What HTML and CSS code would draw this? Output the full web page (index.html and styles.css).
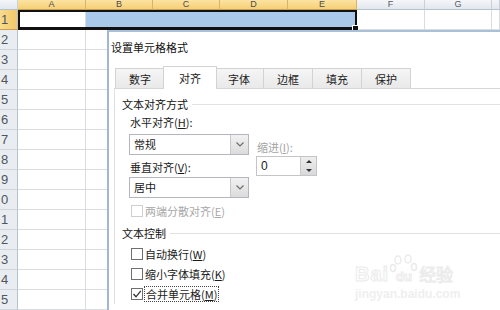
FILE: index.html
```html
<!DOCTYPE html>
<html lang="zh-CN">
<head>
    <meta charset="UTF-8">
    <title>设置单元格格式</title>
    <link rel="stylesheet" href="styles.css">
</head>
<body>

    <div class="sheet" id="sheet"></div>

    <div class="dialog">
        <div class="dialog-title">设置单元格格式</div>

        <div class="tabs">
            <div class="tab">数字</div>
            <div class="tab active">对齐</div>
            <div class="tab">字体</div>
            <div class="tab">边框</div>
            <div class="tab">填充</div>
            <div class="tab">保护</div>
        </div>

        <div class="panel">
            <div class="group-head">
                <span>文本对齐方式</span>
                <span class="group-line"></span>
            </div>

            <div class="align-row">
                <div class="align-col">
                    <div class="label">水平对齐(<u>H</u>):</div>
                    <div class="combo">
                        <span class="combo-text">常规</span>
                        <span class="combo-btn">
                            <svg width="8" height="5" viewBox="0 0 8 5"><path d="M0.5 0.5 L4 4 L7.5 0.5" fill="none" stroke="#6d6d6d" stroke-width="1.2"/></svg>
                        </span>
                    </div>
                    <div class="label second">垂直对齐(<u>V</u>):</div>
                    <div class="combo">
                        <span class="combo-text">居中</span>
                        <span class="combo-btn">
                            <svg width="8" height="5" viewBox="0 0 8 5"><path d="M0.5 0.5 L4 4 L7.5 0.5" fill="none" stroke="#6d6d6d" stroke-width="1.2"/></svg>
                        </span>
                    </div>
                </div>

                <div class="indent-col">
                    <div class="label disabled">缩进(<u>I</u>):</div>
                    <div class="spin">
                        <span class="spin-text">0</span>
                        <span class="spin-btn">
                            <span class="spin-up"></span>
                            <span class="spin-down"></span>
                        </span>
                    </div>
                </div>
            </div>

            <div class="check-row disabled first">
                <span class="box"></span>
                <span>两端分散对齐(<u>E</u>)</span>
            </div>

            <div class="group-head control">
                <span>文本控制</span>
                <span class="group-line"></span>
            </div>

            <div class="check-list">
                <div class="check-row">
                    <span class="box"></span>
                    <span>自动换行(<u>W</u>)</span>
                </div>
                <div class="check-row">
                    <span class="box"></span>
                    <span>缩小字体填充(<u>K</u>)</span>
                </div>
                <div class="check-row">
                    <span class="box">
                        <svg width="10" height="10" viewBox="0 0 10 10"><path d="M1.5 5 L4 7.8 L8.8 1.8" fill="none" stroke="#333" stroke-width="1.3"/></svg>
                    </span>
                    <span class="focus">合并单元格(<u>M</u>)</span>
                </div>
            </div>
        </div>

        <div class="watermark">
            <div class="wm-top">
                <span class="wm-bai">Bai</span>
                <span class="wm-paw">
                    <svg width="30" height="30" viewBox="0 0 30 30">
                        <ellipse cx="9" cy="6" rx="3" ry="4" fill="none" stroke="#ebebeb" stroke-width="1.5"/>
                        <ellipse cx="19" cy="5" rx="3" ry="4" fill="none" stroke="#ebebeb" stroke-width="1.5"/>
                        <ellipse cx="4" cy="14" rx="2.5" ry="3.5" fill="none" stroke="#ebebeb" stroke-width="1.5"/>
                        <ellipse cx="25" cy="13" rx="2.5" ry="3.5" fill="none" stroke="#ebebeb" stroke-width="1.5"/>
                        <text x="15" y="27" text-anchor="middle" font-size="13" font-weight="bold" fill="none" stroke="#ebebeb" font-family="Liberation Sans, sans-serif">du</text>
                    </svg>
                </span>
                <span class="wm-jy">经验</span>
            </div>
            <div class="wm-url">jingyan.baidu.com</div>
        </div>
    </div>

    <script>
        document.addEventListener('DOMContentLoaded', function() {
            buildSheet();
        });

        function buildSheet() {
            const sheet = document.getElementById('sheet');
            const cols = ['A', 'B', 'C', 'D', 'E', 'F', 'G', ''];
            // digits visible in the cropped row header
            const rowLabels = ['1', '2', '3', '4', '5', '6', '7', '8', '9', '0', '1', '2', '3', '4', '5'];

            addCell(sheet, 'corner', '');
            cols.forEach((name, i) => {
                addCell(sheet, i < 5 ? 'col-head sel' : 'col-head', name);
            });

            rowLabels.forEach((label, r) => {
                addCell(sheet, r === 0 ? 'row-head sel' : 'row-head', label);
                cols.forEach((name, i) => {
                    let cls = 'cell';
                    if (r === 0 && i > 0 && i < 5) {
                        cls += ' sel';
                    }
                    addCell(sheet, cls, '');
                });
            });

            // thick border round the selected range A1:E1
            const selection = document.createElement('div');
            selection.className = 'selection';
            const handle = document.createElement('span');
            handle.className = 'fill-handle';
            selection.appendChild(handle);
            sheet.appendChild(selection);
        }

        function addCell(parent, cls, text) {
            const div = document.createElement('div');
            div.className = cls;
            div.textContent = text;
            parent.appendChild(div);
        }
    </script>

</body>
</html>
```

FILE: styles.css
```css
body {
    margin: 0;
    width: 500px;
    height: 310px;
    overflow: hidden;
    background-color: #ffffff;
    font-family: 'Noto Sans CJK SC', sans-serif;
    font-size: 11px;
    color: #1a1a1a;
    position: relative;
}

/* spreadsheet behind the dialog */
.sheet {
    display: grid;
    grid-template-columns: 18px 68px 67px 67px 68px 69px 68px 67px 8px;
    grid-template-rows: 10px repeat(15, 20px);
    position: relative;
}

.corner,
.col-head {
    background: linear-gradient(#f4f6f9, #e2e7ee);
    border-right: 1px solid #c9d0da;
    border-bottom: 1px solid #b7c1cd;
    box-sizing: border-box;
    font-family: 'Liberation Sans', sans-serif;
    font-size: 9px;
    line-height: 8px;
    text-align: center;
    color: #555b63;
    overflow: hidden;
}

.col-head.sel {
    background: linear-gradient(#fbe3a3, #f6cf74);
    border-right-color: #d8b466;
    border-bottom-color: #c6a056;
    color: #4b4b4b;
}

.row-head {
    background-color: #e9edf2;
    border-right: 1px solid #b7c1cd;
    border-bottom: 1px solid #cfd6de;
    box-sizing: border-box;
    font-family: 'Liberation Sans', sans-serif;
    font-size: 13px;
    line-height: 20px;
    padding-left: 1px;
    color: #4e5560;
}

.row-head.sel {
    background: linear-gradient(90deg, #f8db8c, #f3c869);
    border-bottom-color: #c6a056;
}

.cell {
    border-right: 1px solid #dadcdf;
    border-bottom: 1px solid #dadcdf;
    box-sizing: border-box;
}

.cell.sel {
    background-color: #a9c9ea;
    border-right-color: #a9c9ea;
}

.selection {
    position: absolute;
    left: 18px;
    top: 10px;
    width: 339px;
    height: 20px;
    box-sizing: border-box;
    border: 2px solid #111111;
    border-bottom-width: 3px;
}

.fill-handle {
    position: absolute;
    right: -4px;
    bottom: -5px;
    width: 5px;
    height: 5px;
    background-color: #111111;
    border: 1px solid #ffffff;
}

/* format cells dialog */
.dialog {
    position: absolute;
    left: 107px;
    top: 30px;
    right: 0;
    bottom: 0;
    overflow: hidden;
    background-color: #ffffff;
    border-left: 2px solid #9fb7d2;
    border-top: 2px solid #a9c0d9;
}

.dialog-title {
    height: 30px;
    line-height: 30px;
    padding-left: 2px;
    font-size: 11px;
    color: #111111;
}

.tabs {
    display: flex;
    align-items: flex-end;
    height: 26px;
    padding-left: 6px;
    position: relative;
    z-index: 1;
}

.tab {
    height: 20px;
    line-height: 20px;
    padding: 0 13px;
    background: linear-gradient(#f5f5f5, #e9e9e9);
    border: 1px solid #d3d3d3;
    border-bottom: none;
    box-sizing: border-box;
    color: #222222;
}

.tab + .tab {
    border-left: none;
}

.tab.active {
    height: 23px;
    line-height: 22px;
    padding: 0 15px;
    margin: 0 -2px -1px -2px;
    border-left: 1px solid #d3d3d3;
    background: #ffffff;
    position: relative;
}

.panel {
    margin-left: 5px;
    border-top: 1px solid #d6d6d6;
    border-left: 1px solid #e0e0e0;
    padding: 8px 0 0 7px;
}

.group-head {
    display: flex;
    align-items: center;
    gap: 4px;
    line-height: 14px;
    color: #111111;
}

.group-head.control {
    margin-top: 8px;
}

.group-line {
    flex: 1;
    height: 1px;
    background-color: #e2e2e2;
}

.align-row {
    display: flex;
    margin-top: 4px;
    padding-left: 7px;
}

.align-col {
    width: 120px;
}

.label {
    line-height: 14px;
    padding-left: 1px;
    margin-bottom: 5px;
}

.label.second {
    margin-top: 5px;
    margin-bottom: 3px;
}

.label.disabled {
    color: #a3a3a3;
    margin-bottom: 2px;
}

.combo {
    display: flex;
    height: 21px;
    border: 1px solid #b3b6bc;
    box-sizing: border-box;
}

.combo-text {
    flex: 1;
    line-height: 19px;
    padding-left: 4px;
}

.combo-btn {
    width: 17px;
    display: flex;
    align-items: center;
    justify-content: center;
    background: linear-gradient(#f1f1f1, #dcdcdc);
    border-left: 1px solid #c9c9c9;
}

.indent-col {
    margin-left: 7px;
    margin-top: 25px;
}

.spin {
    display: flex;
    width: 61px;
    height: 20px;
    border: 1px solid #c3c5c9;
    box-sizing: border-box;
}

.spin-text {
    flex: 1;
    line-height: 18px;
    padding-left: 4px;
    font-family: 'Liberation Sans', sans-serif;
    font-size: 12px;
}

.spin-btn {
    width: 15px;
    display: flex;
    flex-direction: column;
    background: linear-gradient(#eeeeee, #d9d9d9);
    border-left: 1px solid #c9c9c9;
}

.spin-up,
.spin-down {
    flex: 1;
    display: flex;
    align-items: center;
    justify-content: center;
}

.spin-up::before {
    content: '';
    border-left: 3px solid transparent;
    border-right: 3px solid transparent;
    border-bottom: 3px solid #333333;
}

.spin-down::before {
    content: '';
    border-left: 3px solid transparent;
    border-right: 3px solid transparent;
    border-top: 3px solid #333333;
}

.check-row {
    display: flex;
    align-items: center;
    gap: 2px;
    height: 20px;
    padding-left: 9px;
}

.check-row.first {
    height: 14px;
    margin-top: 6px;
}

.check-row.disabled {
    color: #a8a8a8;
}

.check-list {
    margin-top: 4px;
}

.box {
    width: 12px;
    height: 12px;
    border: 1px solid #6f6f6f;
    box-sizing: border-box;
    background-color: #ffffff;
    display: flex;
    align-items: center;
    justify-content: center;
}

.check-row.disabled .box {
    border-color: #cfcfcf;
}

.focus {
    outline: 1px dotted #444444;
    padding: 0 1px;
    line-height: 14px;
}

/* faint watermark in the corner */
.watermark {
    position: absolute;
    left: 246px;
    top: 222px;
    font-family: 'Liberation Sans', sans-serif;
}

.wm-top {
    display: flex;
    align-items: flex-end;
}

.wm-bai {
    font-size: 20px;
    font-weight: bold;
    line-height: 20px;
    color: #ffffff;
    -webkit-text-stroke: 1px #ebebeb;
    letter-spacing: 1px;
}

.wm-paw {
    display: flex;
}

.wm-jy {
    font-family: 'Noto Sans CJK SC', sans-serif;
    font-size: 17px;
    line-height: 20px;
    color: #ffffff;
    -webkit-text-stroke: 1px #ebebeb;
}

.wm-url {
    font-size: 12px;
    font-weight: bold;
    color: #efefef;
    line-height: 14px;
    margin-top: 3px;
}
```
